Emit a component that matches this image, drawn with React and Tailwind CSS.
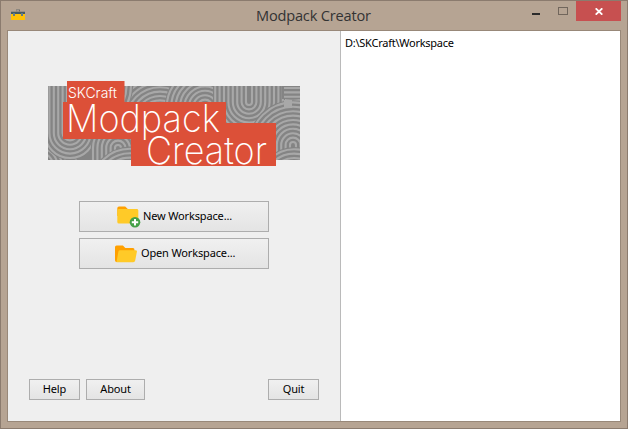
import React from "react";

const PITCH = 4.4;

// Concentric bands; "dir" extends the legs upwards (-1) or downwards (1), 0 is a full circle.
function Bands({ cx, cy, n, dir = 0, leg = 60 }) {
  const shape = (r) =>
    dir === 0
      ? `M${cx - r} ${cy}a${r} ${r} 0 1 0 ${2 * r} 0a${r} ${r} 0 1 0 ${-2 * r} 0Z`
      : `M${cx - r} ${cy + dir * leg}V${cy}A${r} ${r} 0 0 ${dir > 0 ? 1 : 0} ${cx + r} ${cy}V${cy + dir * leg}`;
  const rings = Array.from({ length: n }, (_, i) => 3 + i * PITCH);
  return (
    <g>
      <path d={shape(3 + (n - 1) * PITCH + 2.2)} fill="#848484" />
      {rings.map((r) => (
        <path key={r} d={shape(r)} fill="none" stroke="#a8a8a8" strokeWidth="2.1" />
      ))}
    </g>
  );
}

function Banner() {
  return (
    <svg className="block h-[86px] w-[252px] overflow-visible" viewBox="0 0 252 86">
      <defs>
        <clipPath id="strip">
          <rect x="0" y="5" width="252" height="74" />
        </clipPath>
      </defs>
      <g clipPath="url(#strip)">
        <rect y="5" width="252" height="74" fill="#848484" />
        <Bands cx={62} cy={-12} n={9} />
        <Bands cx={112} cy={40} n={10} />
        <Bands cx={-6} cy={68} n={8} dir={1} />
        <Bands cx={36} cy={4} n={11} />
        <Bands cx={-7} cy={84} n={6} dir={1} />
        <Bands cx={22} cy={52} n={6} dir={-1} />
        <Bands cx={70} cy={67} n={6} dir={1} />
        <Bands cx={82} cy={106} n={9} />
        <Bands cx={245} cy={-14} n={10} />
        <Bands cx={157} cy={26} n={9} dir={1} />
        <Bands cx={201} cy={21} n={8} dir={-1} />
        <rect x="234" y="5" width="18" height="13" fill="#848484" />
        <path d="M236 7H252M236 11.4H252M236 15.8H252" stroke="#a8a8a8" strokeWidth="2.1" />
        <Bands cx={245} cy={64} n={10} dir={1} />
        <path d="M236 19h8v8h-8z" fill="#a8a8a8" />
        <Bands cx={246} cy={102} n={8} />
      </g>
      <path fill="#dc5038" d="M19 0H76.500V21H178V42H228V85H83V58H15V21H19Z" />
      <g fill="#fff" className="font-['Inter','Liberation_Sans',sans-serif]">
        <text x="20" y="17" fontSize="14.5" textLength="49" lengthAdjust="spacingAndGlyphs" className="font-light">SKCraft</text>
        <text x="18" y="51" fontSize="38" textLength="154" lengthAdjust="spacingAndGlyphs" className="font-extralight">Modpack</text>
        <text x="98" y="83" fontSize="38" textLength="121" lengthAdjust="spacingAndGlyphs" className="font-extralight">Creator</text>
      </g>
    </svg>
  );
}

function Toolbox() {
  return (
    <svg className="h-3 w-3.5" viewBox="0 0 14 12" shapeRendering="crispEdges">
      <path fill="#8d8880" d="M5 0h4v3H5z" />
      <path fill="#a59b91" d="M6 1h2v2H6z" />
      <path fill="#666" d="M8 1h1v2H8z" />
      <path fill="#8d8880" d="M0 2h14v1H0z" opacity=".7" />
      <path fill="#455a64" d="M0 3h14v2H0z" />
      <path fill="#ffc107" d="M0 5h14v6H0z" />
      <path fill="#607d8b" d="M2 4h2v3H2zM10 4h2v3h-2z" />
    </svg>
  );
}

function NewFolder() {
  return (
    <svg className="h-[22px] w-6" viewBox="0 0 24 22">
      <path fill="#ffa000" d="M2 .5h6.2l2.6 2.5H19a2 2 0 0 1 2 2v5H.3V2.3Q.3.5 2 .5Z" />
      <rect x=".3" y="3" width="21" height="14.5" rx="1.6" fill="#ffca28" />
      <circle cx="18" cy="16.2" r="5.3" fill="#43a047" />
      <path fill="#fff" d="M17 13h2v2.2h2.2v2H19v2.2h-2v-2.2h-2.2v-2H17z" />
    </svg>
  );
}

function OpenFolder() {
  return (
    <svg className="h-[18px] w-[22px]" viewBox="0 0 22 18">
      <path fill="#ffa000" d="M1.6.5h6.3L10.3 3H18q1.5 0 1.5 2v10L1.5 17Q0 17 0 15.3V2Q0 .5 1.6.5Z" />
      <path fill="#ffca28" d="M5 5.2h15.500q1.7 0 1.4 1.5l-1.7 8.8q-.3 1.7-2 1.7H1.5L3.400 6.4Q3.600 5.2 5 5.2Z" />
    </svg>
  );
}

const button =
  "flex items-center border border-[#adadad] bg-linear-to-b from-[#f0f0f0] to-[#e4e4e4] text-[11px] leading-4 text-black whitespace-nowrap tracking-[-0.15px]";

export default function App() {
  return (
    <div className="flex h-[429px] w-[628px] flex-col border border-[#8b7b6e] bg-[#b6a493] font-['Noto_Sans','Open_Sans',sans-serif]">
      <header className="flex h-[29px] shrink-0 items-start">
        <div className="w-[70px] pt-2 pl-[10px]"><Toolbox /></div>
        <h1 className="ml-[185px] w-[116px] pt-1 text-[14.6px] leading-5 font-normal tracking-[-0.2px] whitespace-nowrap text-[#333] font-['Open_Sans','Noto_Sans',sans-serif]">
          Modpack Creator
        </h1>
        <div className="mr-[6px] ml-auto flex h-5">
          <button className="flex w-11 items-start pt-3 pl-[35px]" aria-label="Minimize"><span className="block h-0.5 w-2 bg-[#2b2b2b]" /></button>
          <button className="flex w-[35px] items-start pt-1.5 pl-[17px]" aria-label="Maximize"><span className="block h-2 w-2.5 border border-[#71665c]" /></button>
          <button className="flex h-5 w-[45px] items-center justify-center bg-[#c75050]" aria-label="Close">
            <svg className="h-[7px] w-2" viewBox="0 0 8 7"><path d="M.7.3 7.3 6.7M7.3.3.7 6.7" stroke="#fff" strokeWidth="1.8" /></svg>
          </button>
        </div>
      </header>
      <main className="mx-[6px] flex h-[392px] w-[614px] shrink-0 border border-[#988879] bg-white">
        <section className="flex w-[333px] flex-col border-r border-[#bababa] bg-[#efefef]">
          <div className="mt-[50px] ml-10"><Banner /></div>
          <div className="mt-[34px] ml-[71px] flex w-[190px] flex-col gap-1.5">
            <button className={`${button} h-[31px] pl-[37px]`}>
              <NewFolder />
              <span className="mb-0.5 ml-[2px]">New Workspace...</span>
            </button>
            <button className={`${button} h-[31px] pl-[35px]`}>
              <OpenFolder />
              <span className="mb-0.5 ml-[4px]">Open Workspace...</span>
            </button>
          </div>
          <div className="mt-auto mb-[21px] ml-[21px] flex w-[290px] gap-1.5">
            <button className={`${button} h-[21px] w-[51px] justify-center pb-0.5`}>Help</button>
            <button className={`${button} h-[21px] w-[59px] justify-center pb-0.5`}>About</button>
            <button className={`${button} ml-auto h-[21px] w-[51px] justify-center pb-0.5`}>Quit</button>
          </div>
        </section>
        <section className="flex-1 pt-1 pl-1 text-[11px] leading-4 tracking-[-0.25px] text-black">D:\SKCraft\Workspace</section>
      </main>
    </div>
  );
}
